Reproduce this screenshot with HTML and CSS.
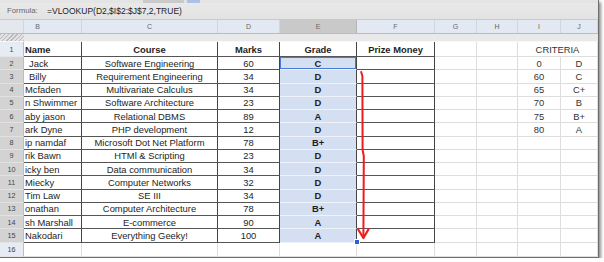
FILE: index.html
```html
<!DOCTYPE html>
<html>
<head>
<meta charset="utf-8">
<link rel="stylesheet" href="styles.css">
</head>
<body>
<div class="frame">
  <div class="tabs"><span class="tab"></span><span class="tab blue"></span></div>
  <div class="formula"><span class="flabel">Formula:</span><span class="fval">=VLOOKUP(D2,$I$2:$J$7,2,TRUE)</span></div>
  <div class="colhdr">
    <div class="ch corner"></div>
    <div class="ch">B</div><div class="ch">C</div><div class="ch">D</div><div class="ch cur">E</div>
    <div class="ch">F</div><div class="ch">G</div><div class="ch">H</div><div class="ch">I</div><div class="ch">J</div>
  </div>
  <div class="freeze"><div class="hatch"></div></div>

  <div class="row r1">
    <div class="rh">1</div>
    <div class="c t b"><div class="nm lft">Name</div></div>
    <div class="c t b">Course</div><div class="c t b">Marks</div><div class="c t b">Grade</div><div class="c t b">Prize Money</div>
    <div class="c"></div><div class="c"></div><div class="c crit">CRITERIA</div>
  </div>
  <div class="row">
    <div class="rh sr">2</div>
    <div class="c t"><div class="nm ctr">Jack</div></div>
    <div class="c t">Software Engineering</div><div class="c t">60</div><div class="c t sel b active">C</div><div class="c t"></div>
    <div class="c"></div><div class="c"></div><div class="c g">0</div><div class="c g">D</div>
  </div>
  <div class="row">
    <div class="rh sr">3</div>
    <div class="c t"><div class="nm ctr">Billy</div></div>
    <div class="c t">Requirement Engineering</div><div class="c t">34</div><div class="c t sel b">D</div><div class="c t"></div>
    <div class="c"></div><div class="c"></div><div class="c g">60</div><div class="c g">C</div>
  </div>
  <div class="row">
    <div class="rh sr">4</div>
    <div class="c t"><div class="nm lft">Mcfaden</div></div>
    <div class="c t">Multivariate Calculus</div><div class="c t">34</div><div class="c t sel b">D</div><div class="c t"></div>
    <div class="c"></div><div class="c"></div><div class="c g">65</div><div class="c g">C+</div>
  </div>
  <div class="row">
    <div class="rh sr">5</div>
    <div class="c t"><div class="nm lft">n Shwimmer</div></div>
    <div class="c t">Software Architecture</div><div class="c t">23</div><div class="c t sel b">D</div><div class="c t"></div>
    <div class="c"></div><div class="c"></div><div class="c g">70</div><div class="c g">B</div>
  </div>
  <div class="row">
    <div class="rh sr">6</div>
    <div class="c t"><div class="nm lft">aby jason</div></div>
    <div class="c t">Relational DBMS</div><div class="c t">89</div><div class="c t sel b">A</div><div class="c t"></div>
    <div class="c"></div><div class="c"></div><div class="c g">75</div><div class="c g">B+</div>
  </div>
  <div class="row">
    <div class="rh sr">7</div>
    <div class="c t"><div class="nm lft">ark Dyne</div></div>
    <div class="c t">PHP development</div><div class="c t">12</div><div class="c t sel b">D</div><div class="c t"></div>
    <div class="c"></div><div class="c"></div><div class="c g">80</div><div class="c g">A</div>
  </div>
  <div class="row">
    <div class="rh sr">8</div>
    <div class="c t"><div class="nm lft">ip namdaf</div></div>
    <div class="c t">Microsoft Dot Net Platform</div><div class="c t">78</div><div class="c t sel b">B+</div><div class="c t"></div>
    <div class="c"></div><div class="c"></div><div class="c"></div><div class="c"></div>
  </div>
  <div class="row">
    <div class="rh sr">9</div>
    <div class="c t"><div class="nm lft">rik Bawn</div></div>
    <div class="c t">HTMl &amp; Scripting</div><div class="c t">23</div><div class="c t sel b">D</div><div class="c t"></div>
    <div class="c"></div><div class="c"></div><div class="c"></div><div class="c"></div>
  </div>
  <div class="row">
    <div class="rh sr">10</div>
    <div class="c t"><div class="nm lft">icky ben</div></div>
    <div class="c t">Data communication</div><div class="c t">34</div><div class="c t sel b">D</div><div class="c t"></div>
    <div class="c"></div><div class="c"></div><div class="c"></div><div class="c"></div>
  </div>
  <div class="row">
    <div class="rh sr">11</div>
    <div class="c t"><div class="nm lft">Miecky</div></div>
    <div class="c t">Computer Networks</div><div class="c t">32</div><div class="c t sel b">D</div><div class="c t"></div>
    <div class="c"></div><div class="c"></div><div class="c"></div><div class="c"></div>
  </div>
  <div class="row">
    <div class="rh sr">12</div>
    <div class="c t"><div class="nm lft">Tim Law</div></div>
    <div class="c t">SE III</div><div class="c t">34</div><div class="c t sel b">D</div><div class="c t"></div>
    <div class="c"></div><div class="c"></div><div class="c"></div><div class="c"></div>
  </div>
  <div class="row">
    <div class="rh sr">13</div>
    <div class="c t"><div class="nm lft">onathan</div></div>
    <div class="c t">Computer Architecture</div><div class="c t">78</div><div class="c t sel b">B+</div><div class="c t"></div>
    <div class="c"></div><div class="c"></div><div class="c"></div><div class="c"></div>
  </div>
  <div class="row">
    <div class="rh sr">14</div>
    <div class="c t"><div class="nm lft">sh Marshall</div></div>
    <div class="c t">E-commerce</div><div class="c t">90</div><div class="c t sel b">A</div><div class="c t"></div>
    <div class="c"></div><div class="c"></div><div class="c"></div><div class="c"></div>
  </div>
  <div class="row">
    <div class="rh sr">15</div>
    <div class="c t"><div class="nm lft">Nakodari</div></div>
    <div class="c t">Everything Geeky!</div><div class="c t">100</div><div class="c t sel b">A</div><div class="c t"></div>
    <div class="c"></div><div class="c"></div><div class="c"></div><div class="c"></div>
  </div>
  <div class="row r16">
    <div class="rh">16</div>
    <div class="c"></div><div class="c"></div><div class="c"></div><div class="c"></div><div class="c"></div>
    <div class="c"></div><div class="c"></div><div class="c"></div><div class="c"></div>
  </div>

  <div class="handle"></div>
  <svg class="arrow" width="20" height="180" viewBox="354 66 20 180">
    <path d="M361.2 72 L362.4 76 L362.6 150 L363.8 156 L363.4 237" fill="none" stroke="#ee1c1c" stroke-width="2" stroke-linecap="round" stroke-linejoin="round"/>
    <path d="M358.2 229.5 L363.4 238 L368.4 229.5" fill="none" stroke="#ee1c1c" stroke-width="2.2" stroke-linecap="round" stroke-linejoin="round"/>
  </svg>
</div>
</body>
</html>
```

FILE: styles.css
```css
* { box-sizing: border-box; }
body {
  margin: 0;
  background: #fff;
  font-family: "Liberation Sans", Arial, sans-serif;
  color: #222;
}
.frame {
  position: relative;
  width: 599px;
  height: 258px;
  border-right: 1px solid #6e6e6e;
  border-bottom: 1px solid #6e6e6e;
  box-shadow: 2px 2px 3px rgba(0,0,0,0.45);
  background: #fff;
  overflow: hidden;
}
.tabs {
  height: 3px;
  background: #e4e4e4;
  display: flex;
  padding-left: 143px;
  gap: 3px;
}
.tab { width: 41px; height: 3px; background: #c9c9c9; }
.tab.blue { width: 13px; background: #a9c2e6; }
.formula {
  height: 17px;
  background: linear-gradient(#e9e9e9, #e3e3e3);
  border-bottom: 1px solid #c9c9c9;
  display: flex;
  align-items: center;
  padding-left: 7px;
  padding-bottom: 1px;
}
.flabel { font-size: 7.8px; color: #666; width: 40px; }
.fval { font-size: 8.5px; color: #222; }
.colhdr {
  height: 14px;
  display: grid;
  grid-template-columns: 24px 58px 136px 62px 77px 78px 42px 41px 43px 37px;
  background: #e2e9f3;
  border-bottom: 1px solid #a3c0e8;
}
.ch {
  font-size: 7px;
  color: #666;
  display: flex;
  align-items: center;
  justify-content: center;
  border-right: 1px solid #ccd6e4;
}
.ch:nth-child(2) { padding-right: 30px; }
.ch.cur { background: #c9c9c9; border-right-color: #b5b5b5; }
.ch.corner { background: #e4e8ee; }
.freeze {
  height: 8px;
  background: #e9e9e9;
  border-bottom: 1px solid #f7f7f7;
  display: flex;
}
.hatch {
  width: 24px;
  background: repeating-linear-gradient(135deg, #b9b9b9 0 1px, #e2e2e2 1px 3px);
}
.row {
  height: 13.25px;
  display: grid;
  grid-template-columns: 24px 58px 136px 62px 77px 78px 42px 41px 43px 37px;
}
.row.r1 { height: 15px; }
.row.r16 { height: 14.5px; }
.rh {
  background: #e7ecf4;
  border-right: 1px solid #bdbdbd;
  border-bottom: 1px solid #e4e4e4;
  font-size: 7.2px;
  color: #444;
  display: flex;
  align-items: center;
  justify-content: center;
}
.rh.sr { background: #d3d3d3; border-bottom-color: #e2e2e2; }
.c {
  font-size: 9.4px;
  white-space: nowrap;
  display: flex;
  align-items: center;
  justify-content: center;
  overflow: hidden;
  border-right: 1px solid #dedede;
  border-bottom: 1px solid #dedede;
  color: #1e1e1e;
}
.c.t { border-right-color: #454545; border-bottom-color: #555; }
.row > .c:nth-child(2) { justify-content: flex-start; }
.nm { flex: none; }
.nm.ctr { padding-left: 5px; }
.nm.lft { padding-left: 1px; }
.b { font-weight: bold; }
.sel { background: #d4dff2; border-bottom-color: #eef2fa !important; }
.active { box-shadow: inset 0 0 0 1px #4a7bd6; }
.crit { grid-column: span 2; color: #333; }
.g { color: #333; }
.handle {
  position: absolute;
  left: 355px;
  top: 240px;
  width: 4px;
  height: 4px;
  background: #2c5fd0;
  outline: 1px solid #fff;
}
.arrow {
  position: absolute;
  left: 354px;
  top: 66px;
  z-index: 3;
}
```
